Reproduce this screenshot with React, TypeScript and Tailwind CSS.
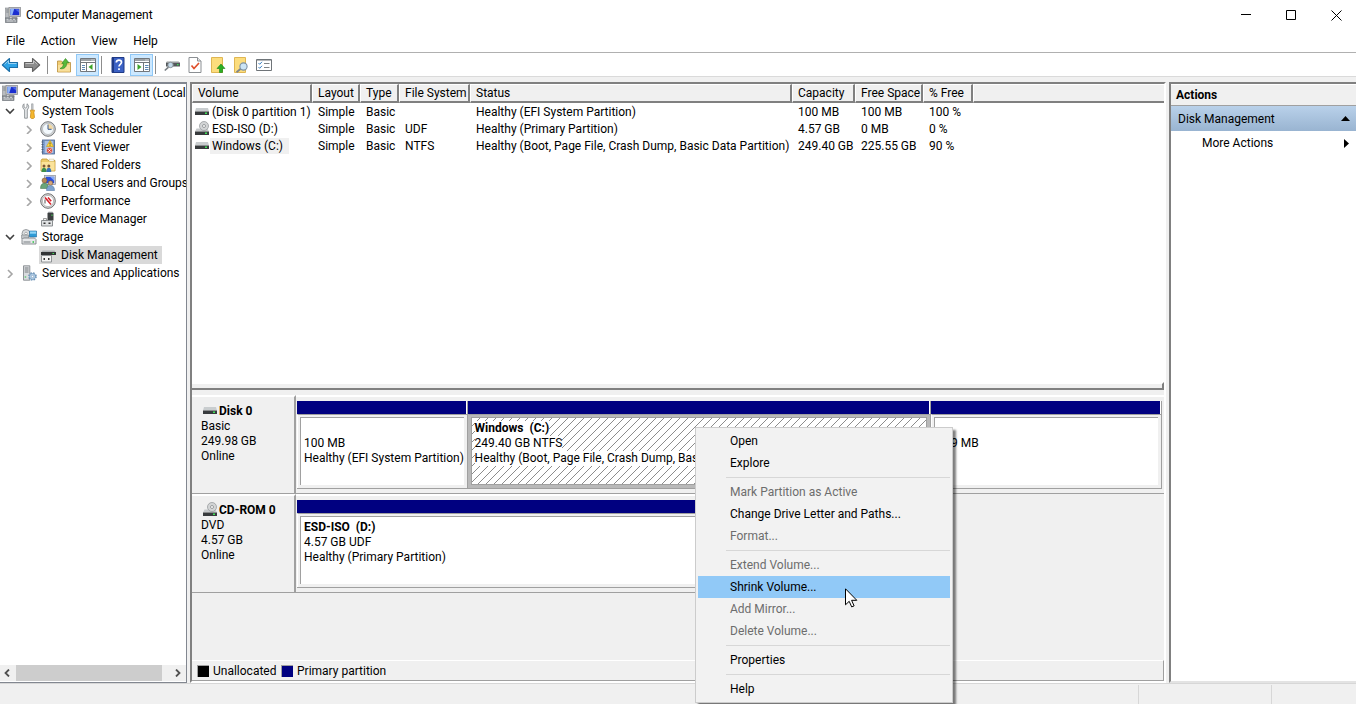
import type { ReactNode } from "react";
import clsx from "clsx";

/* ---------- Icons ---------- */

function Icon({ children, className }: { children: ReactNode; className?: string }) {
  return (
    <svg viewBox="0 0 16 16" aria-hidden="true" className={clsx("size-4 shrink-0", className)}>
      {children}
    </svg>
  );
}

function ComputerIcon() {
  return (
    <Icon>
      <rect x="0.5" y="1" width="4" height="10" fill="#b9bcbf" stroke="#84888c" strokeWidth="0.6" />
      <path d="M1.3 3h2.4M1.3 5h2.4" stroke="#6c7074" strokeWidth="0.7" />
      <rect x="4" y="0.5" width="11.5" height="9" fill="#d6d4c9" stroke="#8d8f94" strokeWidth="0.8" />
      <rect x="5.3" y="1.8" width="9" height="6.4" fill="#1c2fd0" />
      <path d="M5.3 1.8h4L7.2 8.2H5.3z" fill="#8fb4f5" />
      <path d="M10 2.3h4v3.2z" fill="#4967e8" />
      <path d="M7.5 9.5h4l1.5 2h-7z" fill="#a9a9a9" />
      <rect x="0.5" y="11" width="11.5" height="4.5" fill="#8b9096" stroke="#646a70" strokeWidth="0.6" />
      <path d="M1.5 12.3h2M4.7 12.3h2M8 12.3h2M1.5 14h7M9.3 14h1.8" stroke="#e4e6e8" strokeWidth="0.9" />
    </Icon>
  );
}

function ToolsIcon() {
  return (
    <Icon>
      <path d="M3 .8v3l1.5 1.200L6 3.800v-3c1.500.9 2 2.400 1.500 4L6.300 7v8.200H3.600V7L2 5C1.400 3.500 1.800 1.700 3 .8z" fill="#e6e8ea" stroke="#7f8488" strokeWidth="0.8" />
      <path d="M10.500.800h1.600v6.400h-1.600z" fill="#c7cacd" stroke="#888c90" strokeWidth="0.5" />
      <path d="M9.300 7.200h4.200l-.6 2.300.6 5-1.200 1h-1.900l-1.100-1 .6-5z" fill="#f5b82e" stroke="#c68411" strokeWidth="0.7" />
    </Icon>
  );
}

function ClockIcon() {
  return (
    <Icon>
      <circle cx="8" cy="8" r="7.300" fill="#d3d5d6" stroke="#76797c" strokeWidth="1" />
      <circle cx="8" cy="8" r="5.500" fill="#f3f9fd" stroke="#adb1b5" strokeWidth="0.7" />
      <path d="M8 8V3a5 5 0 0 1 5 5z" fill="#f3d9a2" />
      <path d="M8 3.600V8.300h3.600" fill="none" stroke="#3c5b8c" strokeWidth="1" />
    </Icon>
  );
}

function EventIcon() {
  return (
    <Icon>
      <rect x="2.500" y="1" width="12" height="14" fill="#7f9fd0" stroke="#4c648f" strokeWidth="0.8" />
      <path d="M5 3h8M5 5h8M5 7h8M5 9h8M5 11h8M5 13h8" stroke="#dce8f8" strokeWidth="0.9" />
      <path d="M1.500 3h2M1.500 5.500h2M1.500 8h2M1.500 10.500h2M1.500 13h2" stroke="#4a5a75" strokeWidth="0.9" />
      <path d="M10 1.500 13.500 7.500h-7z" fill="#ffd83a" stroke="#c79a10" strokeWidth="0.6" />
      <path d="M10 3.500v2M10 6.200v.7" stroke="#333" strokeWidth="0.8" />
      <circle cx="9.500" cy="11.500" r="2.900" fill="#d94a3d" stroke="#fff" strokeWidth="0.4" />
      <path d="m8.300 10.300 2.400 2.400m0-2.400-2.400 2.400" stroke="#fff" strokeWidth="0.8" />
    </Icon>
  );
}

function SharedFolderIcon() {
  return (
    <Icon>
      <path d="M1 3.500 2 2h5l1 1.500h7V14H1z" fill="#eccb69" stroke="#c49a36" strokeWidth="0.8" />
      <path d="M9 2.200h5v2H9z" fill="#fff" stroke="#b9a25a" strokeWidth="0.4" />
      <path d="M1.500 5h13v8.500h-13z" fill="#fbe39a" />
      <circle cx="4" cy="9" r="1.500" fill="#7c5632" />
      <path d="M1.500 15c0-3 1-4.300 2.500-4.300S6.500 12 6.500 15z" fill="#3d8f4b" />
      <circle cx="8.800" cy="9" r="1.500" fill="#7c5632" />
      <path d="M6.300 15c0-3 1-4.300 2.500-4.300s2.500 1.300 2.500 4.300z" fill="#3572b8" />
    </Icon>
  );
}

function UsersIcon() {
  return (
    <Icon>
      <rect x="4.500" y="0.500" width="11" height="9" fill="#d5d8dc" stroke="#8a8e94" strokeWidth="0.7" />
      <rect x="5.800" y="1.800" width="8.400" height="6.400" fill="#2b50dd" />
      <path d="M10 1.800h4.200v4z" fill="#84a8f6" />
      <circle cx="4.500" cy="5.500" r="2.500" fill="#b88655" stroke="#6d4b2b" strokeWidth="0.5" />
      <path d="M.500 13.500C.500 9.800 2 8.300 4.500 8.300s4 1.500 4 5.200z" fill="#69a579" stroke="#3c6d48" strokeWidth="0.5" />
      <circle cx="10.500" cy="8" r="2.300" fill="#d5a679" stroke="#6d4b2b" strokeWidth="0.5" />
      <path d="M6.500 15.500c0-3.500 1.500-5 4-5s4 1.500 4 5z" fill="#7ea4cf" stroke="#476d9b" strokeWidth="0.5" />
    </Icon>
  );
}

function PerformanceIcon() {
  return (
    <Icon>
      <circle cx="8" cy="8" r="7.300" fill="#dcdcdc" stroke="#6e6e6e" strokeWidth="1" />
      <circle cx="8" cy="8" r="5.600" fill="#fff" stroke="#999" strokeWidth="0.6" />
      <path d="M5 10.500V6.500" fill="none" stroke="#444" strokeWidth="0.9" />
      <path d="m5 4.500 6 7M8 4.500l3.200 3.800" stroke="#d6232c" strokeWidth="1.600" />
    </Icon>
  );
}

function DeviceIcon() {
  return (
    <Icon>
      <path d="M7.500 2h6v7.500h-6z" fill="#3c3f41" />
      <path d="M7.500 2h6l-1-1.200h-4z" fill="#919598" />
      <path d="M11.500 3.500h1V5h-1z" fill="#45d558" />
      <path d="M3.500 7.500h3V10h-3z" fill="#f2f2f2" stroke="#777" strokeWidth="0.7" />
      <path d="M1.500 9.500h11v5.500h-11z" fill="#e1e3e4" stroke="#7f8386" strokeWidth="0.9" />
      <path d="M3.500 11.500h2v1.500h-2zM8.500 11.500h2v1.500h-2z" fill="#333" />
    </Icon>
  );
}

function StorageIcon() {
  return (
    <Icon>
      <circle cx="5" cy="4.500" r="4" fill="#dadddf" stroke="#878b8f" strokeWidth="0.8" />
      <circle cx="5" cy="4.500" r="1.300" fill="#fff" stroke="#888" strokeWidth="0.6" />
      <path d="M8.500 2h7v6h-7z" fill="#2e9bd6" stroke="#25699a" strokeWidth="0.6" />
      <path d="M9 2.500h6v2.200H9z" fill="#90d5f7" />
      <path d="M.5 6h7v3.500h-7z" fill="#c1c5c8" stroke="#81868a" strokeWidth="0.6" />
      <path d="M1 10.500 2.500 9h11l1.500 1.500V15H1z" fill="#e6e8ea" stroke="#71767b" strokeWidth="0.8" />
      <path d="M2.500 13h7" stroke="#777c80" strokeWidth="1" />
      <path d="M11.500 12.300H13v1.400h-1.500z" fill="#2bc442" />
    </Icon>
  );
}

function DiskManagementIcon() {
  return (
    <Icon>
      <path d="M2.500 3.500h12L15.500 5v3h-14V5z" fill="#aeb2b5" />
      <path d="M1 5h15v3H1z" fill="#313436" />
      <path d="M12.500 6h1.500v1h-1.500z" fill="#42df58" />
      <path d="M1.500 8.500h10v6.500h-10z" fill="#f4f4f4" stroke="#868a8d" strokeWidth="0.9" />
      <path d="M3.500 11h1.500v2H3.500zM8 11h1.500v2H8z" fill="#333" />
    </Icon>
  );
}

function ServicesIcon() {
  return (
    <Icon>
      <path d="M2.500.800h6.300v14.400H2.500z" fill="#d9dcdf" stroke="#85898d" strokeWidth="0.9" />
      <path d="M3.700 3h3.900M3.700 5h3.900M3.700 7h3.900" stroke="#6d7277" strokeWidth="0.9" />
      <path d="M3.700 12h1.500" stroke="#2bbf43" strokeWidth="1" />
      <circle cx="11.500" cy="11.500" r="3.400" fill="#bdd6ec" stroke="#688fb3" strokeWidth="1.800" strokeDasharray="1.500 1.200" />
      <circle cx="11.500" cy="11.500" r="2.900" fill="#bdd6ec" stroke="#688fb3" strokeWidth="0.6" />
      <circle cx="11.500" cy="11.500" r="1.200" fill="#fff" stroke="#688fb3" strokeWidth="0.6" />
    </Icon>
  );
}

function DriveIcon() {
  return (
    <svg viewBox="0 0 14 16" aria-hidden="true" className="h-4 w-3.5 shrink-0">
      <path d="M1 4h12l1 3.500H0z" fill="#c9cdcf" />
      <path d="M0 7.500h14V11H0z" fill="#383b3d" />
      <path d="M10 8.500h2V10h-2z" fill="#3fe257" />
    </svg>
  );
}

function DiscDriveIcon() {
  return (
    <svg viewBox="0 0 14 16" aria-hidden="true" className="h-4 w-3.5 shrink-0">
      <path d="M1.500 7.500h11l1.500 3H0z" fill="#c6c9cb" />
      <circle cx="9" cy="5" r="4.500" fill="#d3d5d6" stroke="#999d9f" strokeWidth="0.8" />
      <circle cx="9" cy="5" r="1.500" fill="#fff" stroke="#85898b" strokeWidth="0.8" />
      <path d="M0 10.500h14V14H0z" fill="#383b3d" />
      <path d="M10 11.500h2V13h-2z" fill="#3fe257" />
    </svg>
  );
}

function Arrow({ fill, stroke, flip }: { fill: string; stroke: string; flip?: boolean }) {
  return (
    <svg viewBox="0 0 18 16" aria-hidden="true" className={clsx("h-4 w-[18px]", flip && "-scale-x-100")}>
      <path d="M8.500 1.500 1.300 8l7.200 6.500v-4H16.500v-5h-8z" fill={fill} stroke={stroke} strokeWidth="1.100" strokeLinejoin="round" />
      <path d="M3.500 7.300 7.500 3.700v2.800h8" fill="none" stroke="#fff" strokeOpacity="0.5" />
    </svg>
  );
}

function FolderUpIcon() {
  return (
    <Icon>
      <path d="M1.500 4h4l1.500 1.500h7.500V15h-13z" fill="#f2ce73" stroke="#b98e3b" strokeWidth="0.8" />
      <path d="M2 8h12v6.500H2z" fill="#f8df9b" />
      <path d="M4 11.500c2.500-1 3.500-3 3.500-5H5.800L9.500 1.500 13 5.800h-2.200c0 4-2.500 6.700-6.800 5.700z" fill="#58b93b" stroke="#2f8420" strokeWidth="0.6" />
    </Icon>
  );
}

function PaneIcon({ right }: { right?: boolean }) {
  return (
    <Icon>
      <path d="M.500 1.500h15v13H.500z" fill="#fff" stroke="#72777c" />
      <path d="M1 2h14v2H1z" fill="#9ca1a5" />
      <path d="M1 5.500h14" stroke="#72777c" />
      <path d="M11.500 3h1M13.500 3h1" stroke="#fff" />
      {right ? (
        <>
          <path d="M9.500 6v8" stroke="#72777c" />
          <path d="M11 8.500h3.500M11 10.500h3.500M11 12.500h3.500" stroke="#5d88b5" />
          <path d="m3.500 7 4 3-4 3z" fill="#3da52a" />
        </>
      ) : (
        <>
          <path d="M6.500 6v8" stroke="#72777c" />
          <path d="M2 8.500h3M2 10.500h3M2 12.500h3" stroke="#5d88b5" />
          <path d="m12.500 7-4 3 4 3z" fill="#3da52a" />
        </>
      )}
    </Icon>
  );
}

function HelpIcon() {
  return (
    <Icon>
      <path d="M2 .500h12v15H2z" fill="#3b61c4" stroke="#1f3a86" />
      <path d="M2 .500h2v15H2z" fill="#1f3a86" />
      <path d="M6.300 5.500c0-3.200 5.200-3 5.200-.2 0 2-2.500 2-2.500 4.200M9 11.300v1.800" fill="none" stroke="#fff" strokeWidth="1.700" />
    </Icon>
  );
}

function RescanIcon() {
  return (
    <Icon>
      <path d="M3 4h11.500l1 1.500H2z" fill="#c9cccd" />
      <path d="M2 5.500h14v4H2z" fill="#54585b" />
      <path d="M13 7h1.500v1.300H13z" fill="#3fe257" />
      <circle cx="6.500" cy="8" r="2.700" fill="#c3d9e9" stroke="#838b92" strokeWidth="0.9" />
      <path d="M4.500 10.200.800 13.500" stroke="#777d82" strokeWidth="1.600" />
    </Icon>
  );
}

function CheckPageIcon() {
  return (
    <Icon>
      <path d="M2 .500h8.500L14 4v11.500H2z" fill="#fff" stroke="#8b8f93" />
      <path d="M10.500.500V4H14" fill="#e3e5e7" stroke="#8b8f93" />
      <path d="m4.500 8.500 2.500 3 5-5.500" fill="none" stroke="#e0502c" strokeWidth="1.700" />
    </Icon>
  );
}

function NoteUpIcon() {
  return (
    <Icon>
      <path d="M1.500.500h11v15h-11z" fill="#fcdd7d" stroke="#dfb653" />
      <path d="M9.500 15.500v-4H7l4-4.500 4 4.500h-2.500v4z" fill="#2bae24" stroke="#178415" strokeWidth="0.600" />
    </Icon>
  );
}

function NoteSearchIcon() {
  return (
    <Icon>
      <path d="M1.500.500h11v15h-11z" fill="#fcdd7d" stroke="#dfb653" />
      <path d="m8 11.500-4.500 3.700" stroke="#7d858c" strokeWidth="1.800" />
      <circle cx="10.500" cy="9.500" r="3.600" fill="#cbe4f5" stroke="#7d92a5" strokeWidth="1.100" />
    </Icon>
  );
}

function ListIcon() {
  return (
    <Icon>
      <path d="M.500 2.500h15v11H.500z" fill="#fff" stroke="#6f7478" />
      <path d="M1 3h14" stroke="#6f7478" />
      <path d="m2.500 6 1.200 1.300L6 4.800M2.500 10l1.200 1.300L6 8.800" fill="none" stroke="#3d82c4" />
      <path d="M8 6.500h5.500M8 10.500h5.500" stroke="#7f8488" />
    </Icon>
  );
}

function Chevron({ open }: { open?: boolean }) {
  return (
    <svg viewBox="0 0 10 10" aria-hidden="true" className="size-2.5">
      <path
        d={open ? "M1 3l4 4 4-4" : "M3 2l4 4-4 4"}
        fill="none"
        stroke={open ? "#404040" : "#a6a6a6"}
        strokeWidth="1.600"
      />
    </svg>
  );
}

/* ---------- Data ---------- */

type TreeNode = {
  label: string;
  icon: ReactNode;
  level: 0 | 1 | 2;
  state?: "open" | "closed";
  selected?: boolean;
};

const tree: TreeNode[] = [
  { label: "Computer Management (Local", icon: <ComputerIcon />, level: 0 },
  { label: "System Tools", icon: <ToolsIcon />, level: 1, state: "open" },
  { label: "Task Scheduler", icon: <ClockIcon />, level: 2, state: "closed" },
  { label: "Event Viewer", icon: <EventIcon />, level: 2, state: "closed" },
  { label: "Shared Folders", icon: <SharedFolderIcon />, level: 2, state: "closed" },
  { label: "Local Users and Groups", icon: <UsersIcon />, level: 2, state: "closed" },
  { label: "Performance", icon: <PerformanceIcon />, level: 2, state: "closed" },
  { label: "Device Manager", icon: <DeviceIcon />, level: 2 },
  { label: "Storage", icon: <StorageIcon />, level: 1, state: "open" },
  { label: "Disk Management", icon: <DiskManagementIcon />, level: 2, selected: true },
  { label: "Services and Applications", icon: <ServicesIcon />, level: 1, state: "closed" },
];

const columns = [
  { label: "Volume", width: "w-[120px]" },
  { label: "Layout", width: "w-12" },
  { label: "Type", width: "w-[39px]" },
  { label: "File System", width: "w-[71px]" },
  { label: "Status", width: "w-[322px]" },
  { label: "Capacity", width: "w-[63px]" },
  { label: "Free Space", width: "w-[68px]" },
  { label: "% Free", width: "w-[50px]" },
];

const volumes = [
  {
    name: "(Disk 0 partition 1)",
    icon: <DriveIcon />,
    cells: ["Simple", "Basic", "", "Healthy (EFI System Partition)", "100 MB", "100 MB", "100 %"],
  },
  {
    name: "ESD-ISO (D:)",
    icon: <DiscDriveIcon />,
    cells: ["Simple", "Basic", "UDF", "Healthy (Primary Partition)", "4.57 GB", "0 MB", "0 %"],
  },
  {
    name: "Windows (C:)",
    icon: <DriveIcon />,
    selected: true,
    cells: [
      "Simple",
      "Basic",
      "NTFS",
      "Healthy (Boot, Page File, Crash Dump, Basic Data Partition)",
      "249.40 GB",
      "225.55 GB",
      "90 %",
    ],
  },
];

type MenuEntry = { label: string; disabled?: boolean; active?: boolean };

const menuGroups: MenuEntry[][] = [
  [{ label: "Open" }, { label: "Explore" }],
  [
    { label: "Mark Partition as Active", disabled: true },
    { label: "Change Drive Letter and Paths..." },
    { label: "Format...", disabled: true },
  ],
  [
    { label: "Extend Volume...", disabled: true },
    { label: "Shrink Volume...", active: true },
    { label: "Add Mirror...", disabled: true },
    { label: "Delete Volume...", disabled: true },
  ],
  [{ label: "Properties" }],
  [{ label: "Help" }],
];

/* ---------- Window chrome ---------- */

function TitleBar() {
  const button = "flex h-7 w-10 items-center justify-center";
  return (
    <header className="flex h-[30px] items-center pl-[5px]">
      <ComputerIcon />
      <h1 className="ml-[5px] flex-1">Computer Management</h1>
      <div className="flex gap-[5px]">
        <button aria-label="Minimize" className={button}>
          <svg viewBox="0 0 11 11" className="size-[11px]"><path d="M0 4.500h10" stroke="#000" /></svg>
        </button>
        <button aria-label="Maximize" className={button}>
          <svg viewBox="0 0 11 11" className="size-[11px]"><path d="M.500.500h9v9h-9z" fill="none" stroke="#000" /></svg>
        </button>
        <button aria-label="Close" className={button}>
          <svg viewBox="0 0 11 11" className="size-[11px]"><path d="m.500.500 10 10m0-10-10 10" stroke="#000" /></svg>
        </button>
      </div>
    </header>
  );
}

function ToolButton({ label, active, children }: { label: string; active?: boolean; children: ReactNode }) {
  return (
    <button
      aria-label={label}
      className={clsx(
        "flex h-[22px] w-[23px] items-center justify-center border",
        active ? "border-[#90c8f6] bg-[#cce8ff]" : "border-transparent"
      )}
    >
      {children}
    </button>
  );
}

function ToolDivider() {
  return <div className="mr-1 ml-[2px] h-[18px] w-px bg-[#8d8d8d]" />;
}

function Toolbar() {
  return (
    <div className="flex h-6 items-center border-b border-[#dadada]">
      <div className="flex w-[45px] gap-1 pl-px">
        <button aria-label="Back"><Arrow fill="#2ea3e6" stroke="#1c6fa8" /></button>
        <button aria-label="Forward"><Arrow fill="#8c8c8c" stroke="#636363" flip /></button>
      </div>
      <ToolDivider />
      <ToolButton label="Up one level"><FolderUpIcon /></ToolButton>
      <div className="w-px" />
      <ToolButton label="Show/Hide Console Tree" active><PaneIcon /></ToolButton>
      <ToolDivider />
      <ToolButton label="Help"><HelpIcon /></ToolButton>
      <div className="w-px" />
      <ToolButton label="Show/Hide Action Pane" active><PaneIcon right /></ToolButton>
      <ToolDivider />
      <ToolButton label="Rescan Disks"><RescanIcon /></ToolButton>
      <ToolButton label="Check"><CheckPageIcon /></ToolButton>
      <ToolButton label="Upload"><NoteUpIcon /></ToolButton>
      <ToolButton label="Find"><NoteSearchIcon /></ToolButton>
      <ToolButton label="Settings"><ListIcon /></ToolButton>
    </div>
  );
}

/* ---------- Console tree ---------- */

const levelPadding = { 0: "pl-px", 1: "pl-1", 2: "pl-[23px]" };

function TreeRow({ node }: { node: TreeNode }) {
  return (
    <li
      role="treeitem"
      aria-selected={!!node.selected}
      className={clsx("flex h-[18px] items-center whitespace-nowrap", levelPadding[node.level])}
    >
      {node.level > 0 && (
        <span className="flex w-4 shrink-0 pl-px">
          {node.state && (
            <button aria-label={`Toggle ${node.label}`}><Chevron open={node.state === "open"} /></button>
          )}
        </span>
      )}
      <span className={clsx("flex h-[18px] items-center gap-[5px] pr-1 pl-px", node.selected && "bg-[#d9d9d9]")}>
        {node.icon}
        {node.label}
      </span>
    </li>
  );
}

function ConsoleTree() {
  return (
    <nav aria-label="Console tree" className="flex w-[187px] shrink-0 flex-col overflow-hidden border-t-2 border-r border-b border-[#828790] bg-white">
      <ul role="tree" className="flex-1">
        {tree.map((node) => (
          <TreeRow key={node.label} node={node} />
        ))}
      </ul>
      <div className="mb-px flex h-4 items-center bg-[#f0f0f0]">
        <button aria-label="Scroll left" className="flex w-4 justify-center">
          <svg viewBox="0 0 8 8" className="size-2"><path d="M5 .500 1.500 4 5 7.500" fill="none" stroke="#505050" strokeWidth="1.800" /></svg>
        </button>
        <div className="h-full flex-1 bg-[#cdcdcd]" />
        <button aria-label="Scroll right" className="ml-2 flex w-4 justify-center">
          <svg viewBox="0 0 8 8" className="size-2"><path d="M2 .500 5.500 4 2 7.500" fill="none" stroke="#505050" strokeWidth="1.800" /></svg>
        </button>
      </div>
    </nav>
  );
}

/* ---------- Volume list ---------- */

const headCell =
  "h-[19px] border-t border-r-2 border-b-2 border-l border-t-white border-r-[#808080] border-b-[#808080] border-l-white p-0 pt-px pl-[5px] text-left leading-[15px] font-normal";

function VolumeList() {
  return (
    <div className="h-[298px] overflow-hidden bg-white">
      <table className="w-full table-fixed border-separate border-spacing-0 whitespace-nowrap">
        <thead className="bg-[#f0f0f0]">
          <tr>
            {columns.map((col) => (
              <th key={col.label} scope="col" className={clsx(headCell, col.width)}>{col.label}</th>
            ))}
            <td className="border-t border-b-2 border-l border-t-white border-b-[#808080] border-l-white" />
          </tr>
        </thead>
        <tbody>
          {volumes.map((volume) => (
            <tr key={volume.name} className="h-[17px]">
              <td className="p-0 pl-[3px]">
                <span className="flex h-[17px] items-center gap-px">
                  {volume.icon}
                  <span className={clsx("px-[2px]", volume.selected && "bg-[#f0f0f0] pr-1.5")}>{volume.name}</span>
                </span>
              </td>
              {volume.cells.map((cell, i) => (
                <td key={i} className="p-0 pl-1.5">{cell}</td>
              ))}
              <td />
            </tr>
          ))}
        </tbody>
      </table>
    </div>
  );
}

/* ---------- Graphical disk view ---------- */

function DiskRow({ name, icon, info, children }: { name: string; icon: ReactNode; info: string[]; children: ReactNode }) {
  return (
    <section className="flex h-[99px]">
      <div className="flex w-[104px] shrink-0 flex-col border-t-2 border-r-2 border-b border-t-white border-r-[#a0a0a0] border-b-[#a0a0a0] pt-[7px] pl-[9px] leading-[15px]">
        <h2 className="flex h-[15px] items-end gap-[2px] pl-[2px] font-bold">
          {icon}
          {name}
        </h2>
        {info.map((line) => (
          <p key={line}>{line}</p>
        ))}
      </div>
      {children}
    </section>
  );
}

type PartitionProps = { title?: string; lines: string[]; selected?: boolean; className: string };

function Partition({ title, lines, selected, className }: PartitionProps) {
  return (
    <div className={clsx("flex h-[88px] min-w-0 flex-col border-r border-b border-[#a0a0a0]", className)}>
      <div className="h-[13px] border-r border-white bg-[#000080]" />
      <div
        className={clsx(
          "flex flex-1 border-t border-l border-t-[#a0a0a0] p-[2px] pr-[3px] pb-[3px]",
          selected ? "border-l-[#b9b9b9] bg-[#b9b9b9]" : "border-l-white"
        )}
      >
        <div
          className={clsx(
            "flex min-w-0 flex-1 flex-col items-start overflow-hidden border-t border-l border-[#a0a0a0] pl-[3px] leading-[15px] whitespace-nowrap",
            title ? "pt-[3px]" : "pt-[18px]",
            selected
              ? "border-r border-b bg-white bg-[linear-gradient(135deg,transparent_45%,#8c8c8c_45%,#8c8c8c_55%,transparent_55%)] bg-size-[8px_8px]"
              : "bg-white"
          )}
        >
          {title && <h3 className="bg-white font-bold whitespace-pre">{title}</h3>}
          {lines.map((line) => (
            <p key={line} className="bg-white">{line}</p>
          ))}
        </div>
      </div>
    </div>
  );
}

function DiskView() {
  return (
    <div className="flex flex-1 flex-col pt-[5px]">
      <DiskRow name="Disk 0" icon={<DriveIcon />} info={["Basic", "249.98 GB", "Online"]}>
        <div className="flex flex-1 border-t-2 border-b border-t-white border-b-[#a0a0a0] pt-1 pr-[2px] pl-px">
          <Partition className="flex-[170]" lines={["100 MB", "Healthy (EFI System Partition)"]} />
          <Partition
            className="flex-[463]"
            title="Windows  (C:)"
            lines={["249.40 GB NTFS", "Healthy (Boot, Page File, Crash Dump, Basic Data Partition)"]}
            selected
          />
          <Partition className="flex-[231]" lines={["499 MB"]} />
        </div>
      </DiskRow>
      <DiskRow name="CD-ROM 0" icon={<DiscDriveIcon />} info={["DVD", "4.57 GB", "Online"]}>
        <div className="flex w-[620px] border-t-2 border-b border-t-white border-b-[#a0a0a0] pt-1 pl-px">
          <Partition className="flex-1" title="ESD-ISO  (D:)" lines={["4.57 GB UDF", "Healthy (Primary Partition)"]} />
        </div>
      </DiskRow>
      <footer className="mt-auto flex h-[21px] items-center border-t border-r border-b border-t-white border-r-[#a0a0a0] border-b-[#a0a0a0] pl-[5px]">
        <span className="size-3 border-t border-l border-[#a0a0a0] bg-black" />
        <span className="ml-1 w-[68px]">Unallocated</span>
        <span className="size-3 border-t border-l border-[#a0a0a0] bg-[#000080]" />
        <span className="ml-1">Primary partition</span>
      </footer>
    </div>
  );
}

/* ---------- Actions pane ---------- */

function ActionsPane() {
  return (
    <aside className="w-[187px] shrink-0 border-t-2 border-b-2 border-l-2 border-t-[#808080] border-b-[#e3e3e3] border-l-[#808080] bg-white">
      <h2 className="flex h-[22px] items-center border-t border-b border-t-white border-b-[#a0a0a0] bg-[#f0f0f0] pl-[5px] font-bold">Actions</h2>
      <button className="flex h-[25px] w-full items-center justify-between bg-linear-to-b from-[#b9d1ea] to-[#99b4d1] pr-1.5 pl-[7px]">
        Disk Management
        <svg viewBox="0 0 9 5" className="h-[5px] w-[9px]"><path d="M4.500 0 9 5H0z" /></svg>
      </button>
      <button className="flex h-6 w-full items-center justify-between pr-[7px] pl-[31px]">
        More Actions
        <svg viewBox="0 0 5 9" className="h-[9px] w-[5px]"><path d="M0 0l5 4.500L0 9z" /></svg>
      </button>
    </aside>
  );
}

/* ---------- Context menu ---------- */

function ContextMenu() {
  return (
    <div
      role="menu"
      aria-label="Volume"
      className="absolute top-[427px] left-[695px] w-[258px] border border-[#ccc] bg-[#f2f2f2] p-[2px] shadow-[3px_3px_2px_rgba(0,0,0,0.5)]"
    >
      {menuGroups.map((group, i) => (
        <div key={i}>
          {i > 0 && <hr className="mt-[3px] mb-[3px] ml-7 border-t border-[#d7d7d7]" />}
          {group.map((item) => (
            <button
              key={item.label}
              role="menuitem"
              disabled={item.disabled}
              className={clsx(
                "block h-[22px] w-full pl-8 text-left",
                item.active && "bg-[#91c9f7]",
                item.disabled && "text-[#6d6d6d]"
              )}
            >
              {item.label}
            </button>
          ))}
        </div>
      ))}
    </div>
  );
}

function Cursor() {
  return (
    <svg viewBox="0 0 13 20" aria-hidden="true" className="absolute top-[588px] left-[845px] h-5 w-[13px]">
      <path d="M.500.800v16l3.700-3.500 2.500 5.600 2.400-1-2.500-5.600h5.200z" fill="#fff" stroke="#000" strokeWidth="1" />
    </svg>
  );
}

export default function App() {
  return (
    <div className="relative flex min-h-screen flex-col overflow-hidden bg-white font-[Roboto,sans-serif] text-[12px] leading-4 text-black">
      <TitleBar />
      <nav aria-label="Menu bar" className="flex h-[23px] items-center gap-4 border-b border-[#b0b0b0] pl-1.5">
        {["File", "Action", "View", "Help"].map((item) => (
          <button key={item}>{item}</button>
        ))}
      </nav>
      <Toolbar />
      <main className="flex flex-1 bg-[#f0f0f0] pt-[5px]">
        <ConsoleTree />
        <div className="ml-[3px] flex min-w-0 flex-1 flex-col border-2 border-t-[#808080] border-r-white border-b-white border-l-[#808080]">
          <VolumeList />
          <div className="h-2 border-t-2 border-r-2 border-b-2 border-t-white border-r-[#808080] border-b-[#808080]" />
          <DiskView />
        </div>
        <div className="w-[3px]" />
        <ActionsPane />
      </main>
      <footer className="flex h-[21px] border-t border-[#d7d7d7] bg-[#f0f0f0]">
        <div className="flex-1" />
        <div className="mt-px w-[133px] border-l border-[#d7d7d7]" />
        <div className="mt-px w-[85px] border-l border-[#d7d7d7]" />
      </footer>
      <ContextMenu />
      <Cursor />
    </div>
  );
}
